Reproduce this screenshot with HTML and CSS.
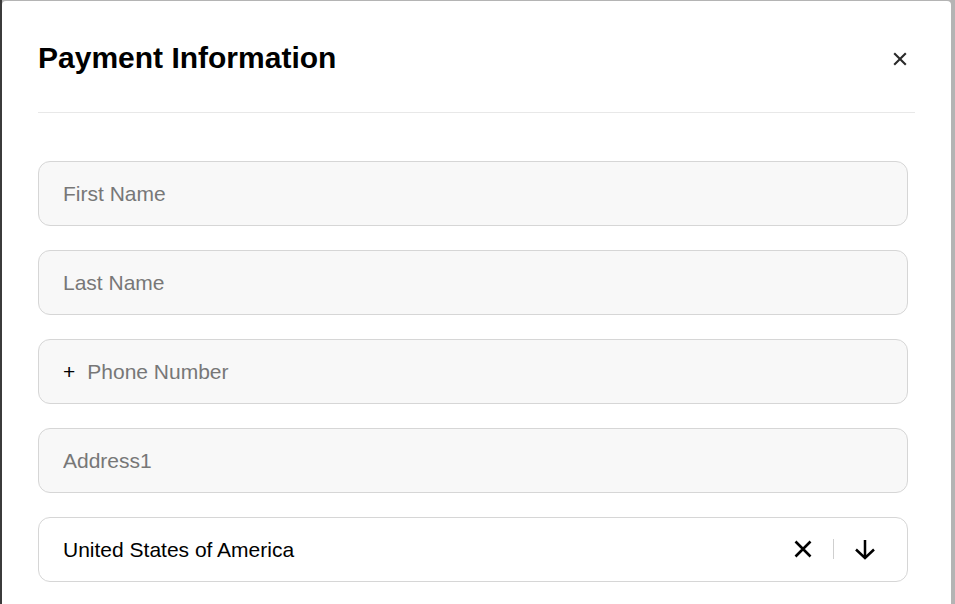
FILE: index.html
```html
<!DOCTYPE html>
<html lang="en">
<head>
<meta charset="utf-8">
<title>Payment Information</title>
<link rel="stylesheet" href="styles.css">
</head>
<body>
<div class="backdrop">
  <div class="modal">
    <div class="modal-header">
      <h2 class="modal-title">Payment Information</h2>
      <button class="close-btn" aria-label="Close">
        <svg width="14" height="14" viewBox="0 0 14 14"><path d="M1.2 1.2 L12.8 12.8 M12.8 1.2 L1.2 12.8" stroke="#2a2a2a" stroke-width="2.1" fill="none"/></svg>
      </button>
    </div>
    <form class="form">
      <div class="field"><input class="field-input" type="text" placeholder="First Name"></div>
      <div class="field"><input class="field-input" type="text" placeholder="Last Name"></div>
      <div class="field"><span class="prefix">+</span><input class="field-input" type="text" placeholder="Phone Number"></div>
      <div class="field"><input class="field-input" type="text" placeholder="Address1"></div>
      <div class="field select">
        <span class="select-value">United States of America</span>
        <div class="select-icons">
          <span class="icon-box">
            <svg width="24" height="24" viewBox="0 0 24 24"><path d="M4.5 4.5 L19.5 19.5 M19.5 4.5 L4.5 19.5" stroke="#000" stroke-width="2.6" fill="none"/></svg>
          </span>
          <span class="sep"></span>
          <span class="icon-box">
            <svg width="24" height="24" viewBox="0 0 24 24"><path d="M12 3 L12 20.5 M3 12.5 L12 21 L21 12.5" stroke="#000" stroke-width="2.5" fill="none"/></svg>
          </span>
        </div>
      </div>
    </form>
  </div>
</div>
</body>
</html>
```
FILE: styles.css
```css
html, body {
  margin: 0;
  padding: 0;
  height: 100%;
  overflow: hidden;
}
body {
  background: linear-gradient(to right, #3b3b3b 0, #3b3b3b 2px, #b4b4b4 2px);
  font-family: "Liberation Sans", Arial, sans-serif;
}
.backdrop {
  padding: 1px 4px 0 2px;
  height: 100%;
  box-sizing: border-box;
}
.modal {
  background: #fff;
  border-top-left-radius: 4px;
  border-top-right-radius: 4px;
  height: 100%;
  padding: 0 36px;
  box-sizing: border-box;
}
.modal-header {
  display: flex;
  align-items: center;
  justify-content: space-between;
  padding: 40px 0 36px 0;
  border-bottom: 1px solid #e8e8e8;
}
.modal-title {
  margin: 0;
  font-size: 30px;
  font-weight: 700;
  color: #000;
  line-height: 34.5px;
}
.close-btn {
  background: none;
  border: 0;
  padding: 0;
  margin-right: 8px;
  width: 14px;
  height: 14px;
  display: flex;
  cursor: pointer;
  position: relative;
  top: 1px;
}
.form {
  display: flex;
  flex-direction: column;
  gap: 24px;
  padding-top: 48px;
  margin-right: 7px;
}
.field {
  height: 65px;
  box-sizing: border-box;
  border: 1px solid #d6d6d6;
  border-radius: 12px;
  background: #f8f8f8;
  display: flex;
  align-items: center;
  padding: 2px 24px 0 24px;
}
.field-input {
  flex: 1;
  border: 0;
  outline: none;
  background: transparent;
  font-family: "Liberation Sans", Arial, sans-serif;
  font-size: 21px;
  color: #000;
  padding: 0;
  margin: 0;
}
.field-input::placeholder {
  color: #777;
}
.prefix {
  font-size: 21px;
  color: #000;
  margin-right: 12px;
}
.select {
  background: #fff;
  padding-right: 30px;
}
.select-value {
  flex: 1;
  font-size: 21px;
  color: #000;
}
.select-icons {
  display: flex;
  align-items: center;
  margin-top: -2px;
}
.icon-box {
  width: 24px;
  height: 24px;
  display: flex;
}
.sep {
  width: 1px;
  height: 20px;
  background: #cfcfcf;
  margin: 0 19px 0 18px;
}
```
